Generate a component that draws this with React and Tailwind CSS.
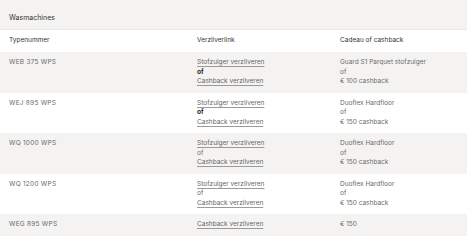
import React from "react";

const rows = [
  { type: "WEB 375 WPS", links: ["Stofzuiger verzilveren", "Cashback verzilveren"], boldOf: true, gift: ["Guard S1 Parquet stofzuiger", "of", "€ 100 cashback"], bg: "bg-[#f4f3f1]" },
  { type: "WEJ 895 WPS", links: ["Stofzuiger verzilveren", "Cashback verzilveren"], boldOf: true, gift: ["Duoflex Hardfloor", "of", "€ 150 cashback"], bg: "bg-white" },
  { type: "WQ 1000 WPS", links: ["Stofzuiger verzilveren", "Cashback verzilveren"], boldOf: false, gift: ["Duoflex Hardfloor", "of", "€ 150 cashback"], bg: "bg-[#f4f3f1]" },
  { type: "WQ 1200 WPS", links: ["Stofzuiger verzilveren", "Cashback verzilveren"], boldOf: false, gift: ["Duoflex Hardfloor", "of", "€ 150 cashback"], bg: "bg-white" },
  { type: "WEG 895 WPS", links: ["Cashback verzilveren"], boldOf: false, gift: ["€ 150"], bg: "bg-[#f4f3f1]" },
];

function Link({ children }) {
  return <span className="text-[#666] underline decoration-[#9a9a9a] underline-offset-[1.5px]">{children}</span>;
}

export default function App() {
  return (
    <div className="w-[475px] h-[251px] bg-white font-['Inter',sans-serif] text-[6.5px] leading-[9.5px] text-[#6b6b6b]">
      <div className="w-[467px]">
        <div className="bg-[#f4f3f1] h-[30px] pl-[9px] pt-[13px] border-b border-[#ebe9e6] text-[7px] text-[#333]">Wasmachines</div>
        <div className="flex h-[22px] items-center text-[#333]">
          <div className="w-[188px] pl-[9px]">Typenummer</div>
          <div className="w-[143px] pl-[9px]">Verzilverlink</div>
          <div className="flex-1 pl-[9px]">Cadeau of cashback</div>
        </div>
        {rows.map((r) => (
          <div key={r.type} className={`flex py-[6px] ${r.bg}`}>
            <div className="w-[188px] pl-[9px] tracking-[0.25px]">{r.type}</div>
            <div className="w-[143px] pl-[9px] flex flex-col items-start">
              {r.links.length === 2 ? (
                <>
                  <Link>{r.links[0]}</Link>
                  <span className={r.boldOf ? "font-bold text-[#222]" : ""}>of</span>
                  <Link>{r.links[1]}</Link>
                </>
              ) : (
                <Link>{r.links[0]}</Link>
              )}
            </div>
            <div className="flex-1 pl-[9px] flex flex-col">
              {r.gift.map((g, i) => (
                <span key={i}>{g}</span>
              ))}
            </div>
          </div>
        ))}
      </div>
    </div>
  );
}
